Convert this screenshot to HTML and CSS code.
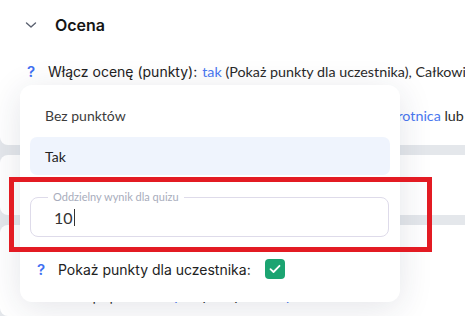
FILE: index.html
```html
<!DOCTYPE html>
<html lang="pl">
<head>
  <meta charset="UTF-8">
  <meta name="viewport" content="width=device-width, initial-scale=1.0">
  <title>Ocena</title>
  <link rel="stylesheet" href="styles.css">
</head>
<body>
  <div class="page">
    <section class="card card-main">
      <div class="section-head">
        <svg class="chevron" width="12" height="8" viewBox="0 0 12 8">
          <path d="M1.5 2 L6 6 L10.5 2" fill="none" stroke="#5b6170" stroke-width="1.4" stroke-linecap="round" stroke-linejoin="round"/>
        </svg>
        <h2>Ocena</h2>
      </div>
      <div class="setting">
        <span class="help">?</span>
        <span class="label">Włącz ocenę (punkty):</span>
        <span class="value"><a class="link">tak</a> (Pokaż punkty dla uczestnika), Całkowity wynik</span>
      </div>
      <div class="setting setting-second">
        <span class="help">?</span>
        <span class="label">Informacja zwrotna:</span>
        <span class="value">Pokaż wyniki quizu, <a class="link">Informacja zwrotnica</a> lub komentarz</span>
      </div>
    </section>
    <section class="card card-mid"></section>
    <section class="card card-low">
      <div class="setting setting-hidden">
        <span class="help">?</span>
        <span class="label">Pokaż poprawne:</span>
        <span class="value"><a class="link">tylko</a> po wysłaniu <a class="link">quizu</a></span>
      </div>
    </section>
  </div>

  <div class="popup">
    <ul class="options">
      <li class="option">Bez punktów</li>
      <li class="option selected">Tak</li>
    </ul>
    <fieldset class="field">
      <legend>Oddzielny wynik dla quizu</legend>
      <div class="field-input">10<span class="caret"></span></div>
    </fieldset>
    <div class="setting popup-setting">
      <span class="help">?</span>
      <span class="label">Pokaż punkty dla uczestnika:</span>
      <span class="checkbox">
        <svg width="12" height="10" viewBox="0 0 12 10">
          <path d="M1.5 5.2 L4.5 8 L10.5 1.8" fill="none" stroke="#fff" stroke-width="1.8" stroke-linecap="round" stroke-linejoin="round"/>
        </svg>
      </span>
    </div>
  </div>

  <div class="highlight"></div>
</body>
</html>
```

FILE: styles.css
```css
body {
  margin: 0;
  width: 465px;
  height: 316px;
  overflow: hidden;
  position: relative;
  background-color: #e4e7eb;
  font-family: Inter, "Noto Sans", sans-serif;
  color: #222;
}

.page {
  display: flex;
  flex-direction: column;
  gap: 10px;
}

.card {
  background: white;
  border-radius: 8px 0 0 8px;
  overflow: hidden;
}

.card-main {
  height: 145px;
  border-top-left-radius: 0;
}

.card-mid {
  height: 60px;
}

.card-low {
  height: 91px;
}

.section-head {
  display: flex;
  align-items: center;
  height: 50px;
  padding-left: 25px;
}

.chevron {
  margin-right: 18px;
}

h2 {
  margin: 0;
  font-size: 16px;
  font-weight: 600;
  color: #151515;
}

.setting {
  display: flex;
  align-items: center;
  height: 24px;
  padding-left: 27px;
  white-space: nowrap;
  font-size: 14px;
}

.setting > * {
  flex-shrink: 0;
}

.card-main .setting {
  margin-top: 9px;
}

.card-main .setting-second {
  margin-top: 20px;
}

.setting-hidden {
  margin-top: 58px;
}

.help {
  color: #3f6ff2;
  font-weight: 600;
  width: 21px;
  font-size: 15px;
}

.label {
  margin-right: 5px;
}

.value {
  font-family: Lato, sans-serif;
  font-size: 14.3px;
  color: #2a2a2a;
}

.link {
  color: #4a78f0;
}

.popup {
  position: absolute;
  left: 20px;
  top: 85px;
  width: 380px;
  height: 217px;
  box-sizing: border-box;
  padding: 11px 10px 0;
  background: white;
  border-radius: 12px;
  box-shadow: 0 6px 34px rgba(30, 40, 70, 0.12);
}

.options {
  list-style: none;
  margin: 0;
  padding: 0;
  display: flex;
  flex-direction: column;
  gap: 3px;
}

.option {
  height: 38px;
  display: flex;
  align-items: center;
  padding-left: 15px;
  font-family: Lato, sans-serif;
  font-size: 14px;
  color: #3c3c3c;
  border-radius: 7px;
}

.option.selected {
  background-color: #eff4fd;
  color: #222;
}

.field {
  margin: 15px 1px 0 0;
  padding: 0 0 5px 17px;
  border: 1px solid #dedbea;
  border-radius: 8px;
}

.field legend {
  padding: 0 5px;
  font-family: Lato, sans-serif;
  font-size: 11px;
  line-height: 14px;
  color: #a8adbc;
}

.field-input {
  display: flex;
  align-items: center;
  height: 27px;
  padding-left: 6px;
  font-family: Lato, sans-serif;
  font-size: 16px;
  color: #333;
}

.caret {
  display: inline-block;
  width: 1px;
  height: 17px;
  margin-left: 1px;
  background: #333;
}

.popup-setting {
  margin-top: 20px;
  padding-left: 7px;
}

.popup-setting .label {
  margin-right: 14px;
}

.checkbox {
  width: 20px;
  height: 20px;
  border-radius: 4px;
  background-color: #1ba471;
  display: flex;
  align-items: center;
  justify-content: center;
}

.highlight {
  position: absolute;
  left: 9px;
  top: 177px;
  width: 413px;
  height: 65px;
  border: 5px solid #e31b23;
}
```
